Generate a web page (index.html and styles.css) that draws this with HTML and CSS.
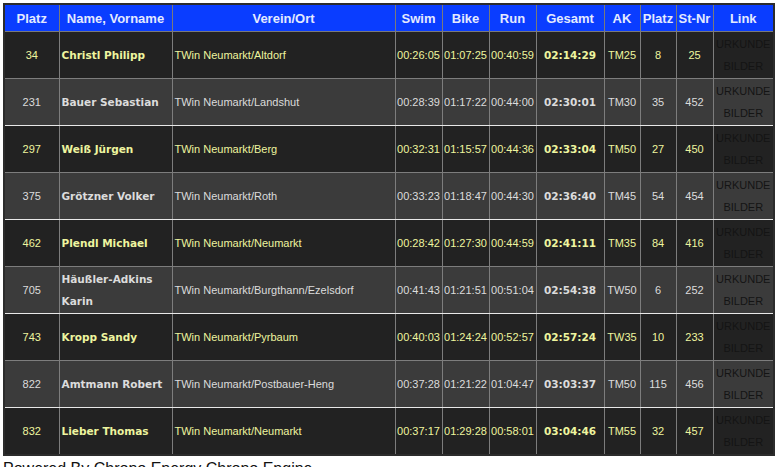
FILE: index.html
```html
<!DOCTYPE html>
<html lang="de">
<head>
    <meta charset="UTF-8">
    <title>Ergebnisse - TWin Neumarkt</title>
    <link rel="stylesheet" href="styles.css">
</head>
<body>
    <table class="results">
        <colgroup>
            <col class="c-platz">
            <col class="c-name">
            <col class="c-verein">
            <col class="c-time">
            <col class="c-time">
            <col class="c-time">
            <col class="c-gesamt">
            <col class="c-ak">
            <col class="c-ak">
            <col class="c-stnr">
            <col class="c-link">
        </colgroup>
        <thead>
            <tr>
                <th>Platz</th>
                <th>Name, Vorname</th>
                <th>Verein/Ort</th>
                <th>Swim</th>
                <th>Bike</th>
                <th>Run</th>
                <th>Gesamt</th>
                <th>AK</th>
                <th>Platz</th>
                <th>St-Nr</th>
                <th>Link</th>
            </tr>
        </thead>
        <tbody>
            <tr class="odd">
                <td>34</td><td class="name">Christl Philipp</td><td class="verein">TWin Neumarkt/Altdorf</td>
                <td>00:26:05</td><td>01:07:25</td><td>00:40:59</td><td class="total">02:14:29</td>
                <td>TM25</td><td>8</td><td>25</td>
                <td class="link"><a href="#">URKUNDE</a><br><a href="#">BILDER</a></td>
            </tr>
            <tr class="even">
                <td>231</td><td class="name">Bauer Sebastian</td><td class="verein">TWin Neumarkt/Landshut</td>
                <td>00:28:39</td><td>01:17:22</td><td>00:44:00</td><td class="total">02:30:01</td>
                <td>TM30</td><td>35</td><td>452</td>
                <td class="link"><a href="#">URKUNDE</a><br><a href="#">BILDER</a></td>
            </tr>
            <tr class="odd">
                <td>297</td><td class="name">Weiß Jürgen</td><td class="verein">TWin Neumarkt/Berg</td>
                <td>00:32:31</td><td>01:15:57</td><td>00:44:36</td><td class="total">02:33:04</td>
                <td>TM50</td><td>27</td><td>450</td>
                <td class="link"><a href="#">URKUNDE</a><br><a href="#">BILDER</a></td>
            </tr>
            <tr class="even">
                <td>375</td><td class="name">Grötzner Volker</td><td class="verein">TWin Neumarkt/Roth</td>
                <td>00:33:23</td><td>01:18:47</td><td>00:44:30</td><td class="total">02:36:40</td>
                <td>TM45</td><td>54</td><td>454</td>
                <td class="link"><a href="#">URKUNDE</a><br><a href="#">BILDER</a></td>
            </tr>
            <tr class="odd">
                <td>462</td><td class="name">Plendl Michael</td><td class="verein">TWin Neumarkt/Neumarkt</td>
                <td>00:28:42</td><td>01:27:30</td><td>00:44:59</td><td class="total">02:41:11</td>
                <td>TM35</td><td>84</td><td>416</td>
                <td class="link"><a href="#">URKUNDE</a><br><a href="#">BILDER</a></td>
            </tr>
            <tr class="even">
                <td>705</td><td class="name">Häußler-Adkins Karin</td><td class="verein">TWin Neumarkt/Burgthann/Ezelsdorf</td>
                <td>00:41:43</td><td>01:21:51</td><td>00:51:04</td><td class="total">02:54:38</td>
                <td>TW50</td><td>6</td><td>252</td>
                <td class="link"><a href="#">URKUNDE</a><br><a href="#">BILDER</a></td>
            </tr>
            <tr class="odd">
                <td>743</td><td class="name">Kropp Sandy</td><td class="verein">TWin Neumarkt/Pyrbaum</td>
                <td>00:40:03</td><td>01:24:24</td><td>00:52:57</td><td class="total">02:57:24</td>
                <td>TW35</td><td>10</td><td>233</td>
                <td class="link"><a href="#">URKUNDE</a><br><a href="#">BILDER</a></td>
            </tr>
            <tr class="even">
                <td>822</td><td class="name">Amtmann Robert</td><td class="verein">TWin Neumarkt/Postbauer-Heng</td>
                <td>00:37:28</td><td>01:21:22</td><td>01:04:47</td><td class="total">03:03:37</td>
                <td>TM50</td><td>115</td><td>456</td>
                <td class="link"><a href="#">URKUNDE</a><br><a href="#">BILDER</a></td>
            </tr>
            <tr class="odd">
                <td>832</td><td class="name">Lieber Thomas</td><td class="verein">TWin Neumarkt/Neumarkt</td>
                <td>00:37:17</td><td>01:29:28</td><td>00:58:01</td><td class="total">03:04:46</td>
                <td>TM55</td><td>32</td><td>457</td>
                <td class="link"><a href="#">URKUNDE</a><br><a href="#">BILDER</a></td>
            </tr>
        </tbody>
    </table>

    <p class="footer">Powered By Chrono Energy Chrono Engine</p>
</body>
</html>
```

FILE: styles.css
```css
body {
    margin: 3px;
    background-color: #fff;
    font-family: "Liberation Sans", Arial, sans-serif;
    color: #111;
}

.results {
    width: 770px;
    table-layout: fixed;
    border-collapse: collapse;
    border: 2px solid #2c2c2c;
    font-size: 11px;
}

.c-platz { width: 55px; }
.c-name { width: 113px; }
.c-verein { width: 223px; }
.c-time { width: 47px; }
.c-gesamt { width: 68px; }
.c-ak { width: 36px; }
.c-stnr { width: 37px; }
.c-link { width: 61px; }

.results th {
    height: 26px;
    padding: 0;
    background-color: #0a3dff;
    color: #e4eaff;
    font-size: 13px;
    font-weight: bold;
    border: 1px solid #7a7a7a;
    border-top: none;
}

.results td {
    height: 44px;
    padding: 1px 0;
    text-align: center;
    line-height: 22px;
    white-space: nowrap;
    overflow: hidden;
    border: 1px solid #7d7d7d;
}

.results tr.odd td {
    background-color: #222;
    color: #eef59f;
}

.results tr.even td {
    background-color: #3b3b3b;
    color: #dcdcdc;
    border-bottom-color: #e8e8e8;
}

.results tr:last-child td {
    border-bottom-color: #2c2c2c;
}

.results td.name {
    text-align: left;
    padding-left: 2px;
    white-space: normal;
    font-family: "DejaVu Sans", Verdana, sans-serif;
    font-weight: bold;
    font-size: 10.5px;
}

.results td.verein {
    text-align: left;
    padding-left: 2px;
}

.results td.total {
    font-family: "DejaVu Sans", Verdana, sans-serif;
    font-weight: bold;
    font-size: 10.5px;
}

.results td.link {
    text-overflow: clip;
}

.results td.link a {
    color: #141414;
    text-decoration: none;
}

.footer {
    margin: 4px 0 0;
    font-size: 16px;
    color: #111;
}
```
